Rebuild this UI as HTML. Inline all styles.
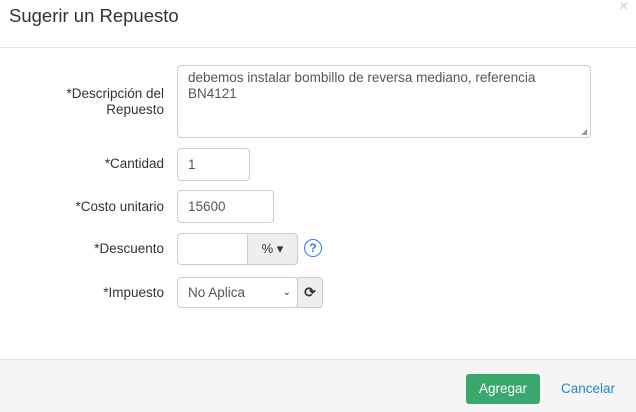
<!DOCTYPE html><html><head><style>
body{margin:0;width:636px;height:411px;background:#fff;font-family:"Liberation Sans",sans-serif;font-size:13px;color:#333;position:relative;overflow:hidden}
.a{position:absolute}
.lbl{position:absolute;right:472px;text-align:right;font-size:13.5px;color:#333;line-height:16px}
.inp{position:absolute;border:1px solid #ccc;border-radius:4px;box-sizing:border-box;background:#fff;padding-left:10px;font-size:13.5px;color:#555}
</style></head><body>
<div class="a" style="left:9px;top:5px;font-size:18.5px;color:#333">Sugerir un Repuesto</div>
<div class="a" style="left:619px;top:-2px;font-size:16px;color:#ccc">×</div>
<div class="a" style="left:0;top:47px;width:636px;height:1px;background:#e5e5e5"></div>

<div class="lbl" style="top:86px">*Descripción del<br>Repuesto</div>
<div class="inp" style="left:177px;top:65px;width:414px;height:73px;padding:4px 10px;line-height:16px;color:#555">debemos instalar bombillo de reversa mediano, referencia BN4121</div>
<div class="a" style="left:581px;top:127px;font-size:8px;color:#999">◢</div>

<div class="lbl" style="top:156px">*Cantidad</div>
<div class="inp" style="left:177px;top:148px;width:73px;height:33px;line-height:31px">1</div>

<div class="lbl" style="top:199px">*Costo unitario</div>
<div class="inp" style="left:177px;top:190px;width:97px;height:33px;line-height:31px">15600</div>

<div class="lbl" style="top:241px">*Descuento</div>
<div class="inp" style="left:177px;top:233px;width:121px;height:32px"></div>
<div class="a" style="left:247px;top:233px;width:51px;height:32px;box-sizing:border-box;border:1px solid #ccc;border-radius:0 4px 4px 0;background:#eee;text-align:center;line-height:30px;font-size:13px;color:#333">% ▾</div>
<div class="a" style="left:304px;top:239px;width:16px;height:16px;border:1.5px solid #2d7ff0;border-radius:50%;color:#2d7ff0;text-align:center;line-height:16px;font-size:12px;font-weight:bold">?</div>

<div class="lbl" style="top:285px">*Impuesto</div>
<div class="inp" style="left:177px;top:277px;width:121px;height:31px;line-height:29px;color:#555">No Aplica<span style="position:absolute;right:6px;top:0;font-size:10px;color:#333">⌄</span></div>
<div class="a" style="left:297px;top:277px;width:26px;height:31px;box-sizing:border-box;border:1px solid #ccc;border-radius:0 4px 4px 0;background:#eee;text-align:center;line-height:29px;font-size:14px;font-weight:bold;color:#333">⟳</div>

<div class="a" style="left:0;top:359px;width:636px;height:52px;background:#f5f5f5;border-top:1px solid #e0e0e0"></div>
<div class="a" style="left:466px;top:374px;width:74px;height:30px;background:#3aa76d;border-radius:3px;color:#fff;text-align:center;line-height:30px;font-size:13.5px">Agregar</div>
<div class="a" style="left:561px;top:381px;color:#1e88d0;font-size:13.5px">Cancelar</div>
</body></html>
